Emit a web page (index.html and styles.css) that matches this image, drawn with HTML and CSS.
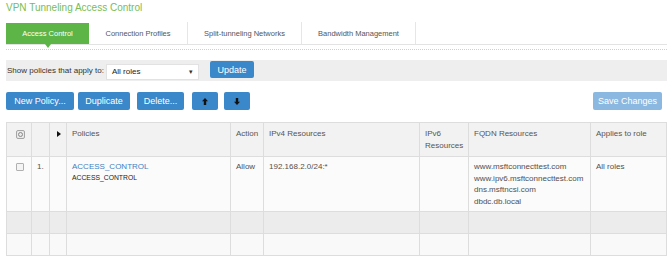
FILE: index.html
```html
<!DOCTYPE html>
<html lang="en">
<head>
  <meta charset="UTF-8" />
  <title>VPN Tunneling Access Control</title>
  <link rel="stylesheet" href="styles.css">
</head>
<body>

<div class="page">
  <h1 class="title">VPN Tunneling Access Control</h1>

  <ul class="tabs">
    <li class="tab tab-access active">Access Control</li>
    <li class="tab tab-profiles">Connection Profiles</li>
    <li class="tab tab-split">Split-tunneling Networks</li>
    <li class="tab tab-bandwidth">Bandwidth Management</li>
  </ul>
  <div class="divider"></div>

  <div class="filter-bar">
    <label for="roleSelect">Show policies that apply to:</label>
    <div class="select" id="roleSelect">All roles <span class="caret">&#9662;</span></div>
    <button class="btn btn-update">Update</button>
  </div>

  <div class="toolbar">
    <button class="btn btn-new">New Policy...</button>
    <button class="btn btn-dup">Duplicate</button>
    <button class="btn btn-del">Delete...</button>
    <button class="btn btn-arrow">
      <svg width="6" height="7" viewBox="0 0 6 7"><path d="M3 0 L6 3.2 L4.2 3.2 L4.2 7 L1.8 7 L1.8 3.2 L0 3.2 Z" fill="#111"/></svg>
    </button>
    <button class="btn btn-arrow">
      <svg width="6" height="7" viewBox="0 0 6 7"><path d="M3 7 L6 3.8 L4.2 3.8 L4.2 0 L1.8 0 L1.8 3.8 L0 3.8 Z" fill="#111"/></svg>
    </button>
    <button class="btn btn-save" disabled>Save Changes</button>
  </div>

  <table class="policies">
    <colgroup>
      <col style="width:25px">
      <col style="width:18px">
      <col style="width:17px">
      <col style="width:164px">
      <col style="width:33px">
      <col style="width:156px">
      <col style="width:49px">
      <col style="width:122px">
      <col>
    </colgroup>
    <thead>
      <tr>
        <th class="cell-check">
          <svg width="9" height="9" viewBox="0 0 9 9"><rect x="0.5" y="0.5" width="8" height="8" rx="1.5" fill="#e9e9e9" stroke="#a5a5a5"/><circle cx="4.5" cy="4.5" r="2" fill="none" stroke="#8a8a8a"/></svg>
        </th>
        <th></th>
        <th class="cell-expand">
          <svg width="4" height="6" viewBox="0 0 4 6"><path d="M0 0 L4 3 L0 6 Z" fill="#111"/></svg>
        </th>
        <th>Policies</th>
        <th>Action</th>
        <th>IPv4 Resources</th>
        <th>IPv6 Resources</th>
        <th>FQDN Resources</th>
        <th>Applies to role</th>
      </tr>
    </thead>
    <tbody>
      <tr class="row-policy">
        <td class="cell-check"><span class="checkbox"></span></td>
        <td>1.</td>
        <td></td>
        <td>
          <a href="#" class="policy-name">ACCESS_CONTROL</a>
          <div class="policy-desc">ACCESS_CONTROL</div>
        </td>
        <td>Allow</td>
        <td>192.168.2.0/24:*</td>
        <td></td>
        <td>www.msftconnecttest.com<br>www.ipv6.msftconnecttest.com<br>dns.msftncsi.com<br>dbdc.db.local</td>
        <td>All roles</td>
      </tr>
      <tr class="row-empty row-alt">
        <td></td><td></td><td></td><td></td><td></td><td></td><td></td><td></td><td></td>
      </tr>
      <tr class="row-empty">
        <td></td><td></td><td></td><td></td><td></td><td></td><td></td><td></td><td></td>
      </tr>
    </tbody>
  </table>
</div>

</body>
</html>
```

FILE: styles.css
```css
:root {
  --green: #5cb546;
  --title-green: #78bd55;
  --blue: #3a87c9;
  --blue-disabled: #8ab8e0;
  --border: #dddddd;
  --text: #505050;
}

* {
  box-sizing: border-box;
}

body {
  margin: 0;
  font-family: 'Liberation Sans', Arial, sans-serif;
  color: var(--text);
  background: #fff;
  overflow: hidden;
}

.page {
  padding: 1px 0 0 6px;
}

.title {
  margin: 0;
  font-size: 10px;
  line-height: 14px;
  font-weight: normal;
  color: var(--title-green);
}

/* tabs */
.tabs {
  list-style: none;
  margin: 7px 0 0;
  padding: 0;
  display: flex;
  border-bottom: 1px solid #e3e3e3;
}

.tab {
  height: 22px;
  display: flex;
  align-items: center;
  justify-content: center;
  font-size: 7.5px;
  color: #555;
  border-right: 1px solid #e6e6e6;
  position: relative;
}

.tab-access { width: 83px; }
.tab-profiles { width: 99px; }
.tab-split { width: 114px; }
.tab-bandwidth { width: 114px; }

.tab.active {
  background: var(--green);
  color: #fff;
  border-right: none;
  margin-top: 1px;
  height: 21px;
}

.tab.active::after {
  content: '';
  position: absolute;
  left: 50%;
  bottom: -4px;
  margin-left: -3px;
  border-left: 3px solid transparent;
  border-right: 3px solid transparent;
  border-top: 4px solid var(--green);
}

.divider {
  margin-top: 4px;
  border-top: 1px dotted #cfcfcf;
}

/* filter */
.filter-bar {
  margin-top: 10px;
  height: 21px;
  background: #eeeeee;
  display: flex;
  align-items: center;
  padding-left: 1px;
  font-size: 8px;
  color: #333;
}

.filter-bar label {
  margin-right: 2px;
}

.select {
  width: 93px;
  height: 16px;
  margin-top: 2px;
  background: #fff;
  border: 1px solid #e2e2e2;
  display: flex;
  align-items: center;
  padding: 0 5px;
  font-size: 8px;
  color: #222;
}

.caret {
  margin-left: auto;
  font-size: 7px;
  color: #333;
}

.btn {
  font-family: 'Liberation Sans', Arial, sans-serif;
  font-size: 9px;
  color: #fff;
  background: var(--blue);
  border: none;
  border-radius: 2px;
  height: 18px;
  padding: 0 8px;
  cursor: pointer;
}

.btn-update {
  margin-left: 11px;
  height: 17px;
  width: 44px;
  padding: 0;
  margin-bottom: 2px;
}

/* toolbar */
.toolbar {
  margin-top: 11px;
  padding-right: 5px;
  display: flex;
  align-items: center;
}

.btn-new { width: 68px; padding: 0; }
.btn-dup { width: 52px; padding: 0; margin-left: 4px; }
.btn-del { width: 47px; padding: 0; margin-left: 7px; }
.btn-arrow {
  width: 26px;
  padding: 0;
  margin-left: 8px;
  display: flex;
  align-items: center;
  justify-content: center;
}
.btn-arrow + .btn-arrow { margin-left: 6px; }

.btn-save {
  margin-left: auto;
  width: 69px;
  padding: 0;
  background: var(--blue-disabled);
  cursor: default;
}

/* table */
.policies {
  margin-top: 12px;
  width: 100%;
  table-layout: fixed;
  border-collapse: collapse;
  font-size: 8px;
  line-height: 11.5px;
  color: var(--text);
}

.policies th,
.policies td {
  border: 1px solid var(--border);
  padding: 4px 5px;
  text-align: left;
  vertical-align: top;
}

.policies th {
  background: #f2f2f2;
  font-weight: normal;
  height: 34px;
  padding-top: 5px;
  color: #555;
}

.policies .cell-check {
  padding-left: 9px;
}

.policies th.cell-check svg {
  margin-top: 2px;
}

.policies th.cell-expand {
  padding-left: 7px;
}

.policies th.cell-expand svg {
  margin-top: 3px;
}

.checkbox {
  display: inline-block;
  width: 8px;
  height: 8px;
  margin-top: 2px;
  border: 1px solid #b0b0b0;
  border-radius: 1px;
  background: #f4f4f4;
}

.row-policy td {
  height: 55px;
  background: #fbfbfb;
  padding-top: 4px;
}

.policy-name {
  color: #3f80c2;
  text-decoration: none;
  font-size: 8px;
}

.policy-desc {
  font-size: 6.8px;
  line-height: 9px;
  color: #222;
}

.row-empty td {
  height: 22px;
  background: #f9f9f9;
}

.row-empty.row-alt td {
  background: #ececec;
}
```
